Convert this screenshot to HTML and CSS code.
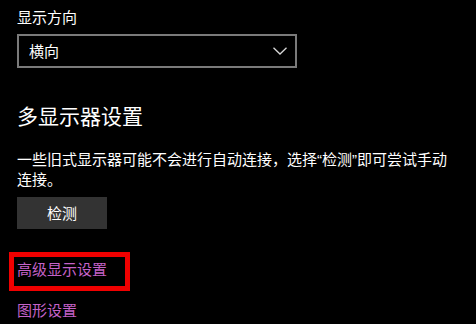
FILE: index.html
```html
<!DOCTYPE html>
<html lang="zh-CN">
<head>
<meta charset="utf-8">
<link rel="stylesheet" href="styles.css">
</head>
<body>
<div class="page">
  <div class="label">显示方向</div>
  <div class="select">
    <span class="select-text">横向</span>
    <svg class="chevron" width="14" height="8" viewBox="0 0 14 8"><path d="M0.5 0.8 L7 7 L13.5 0.8" fill="none" stroke="#d8d8d8" stroke-width="1.3"/></svg>
  </div>
  <h2 class="heading">多显示器设置</h2>
  <p class="desc">一些旧式显示器可能不会进行自动连接，选择“检测”即可尝试手动连接。</p>
  <div class="btn">检测</div>
  <div class="highlight"><a class="link">高级显示设置</a></div>
  <a class="link link-second">图形设置</a>
</div>
</body>
</html>
```

FILE: styles.css
```css
html, body {
  margin: 0;
  padding: 0;
  background: #000;
}
body {
  width: 476px;
  height: 324px;
  overflow: hidden;
  font-family: "Noto Sans CJK SC", "Microsoft YaHei", sans-serif;
  color: #fff;
  font-size: 15px;
  line-height: 20px;
}
.page {
  padding: 7px 0 0 17px;
  display: flex;
  flex-direction: column;
  align-items: flex-start;
}
.label {
  line-height: 20px;
}
.select {
  margin-top: 7px;
  box-sizing: border-box;
  width: 280px;
  height: 34px;
  border: 2px solid #7a7a7a;
  display: flex;
  align-items: center;
  justify-content: space-between;
  padding: 0 8px 0 10px;
}
.chevron {
  display: block;
}
.heading {
  margin: 33px 0 0;
  font-size: 21px;
  font-weight: normal;
  line-height: 28px;
}
.desc {
  margin: 21px 0 0;
  width: 440px;
  line-height: 20px;
  font-family: "Liberation Sans", "Noto Sans CJK SC", sans-serif;
}
.btn {
  margin-top: 7px;
  width: 90px;
  height: 32px;
  background: #333;
  display: flex;
  align-items: center;
  justify-content: center;
}
.highlight {
  margin: 23px 0 0 -8px;
  box-sizing: border-box;
  width: 121px;
  border: 5px solid #f00000;
  padding: 2px 0 7px 3px;
}
.link {
  display: block;
  color: #c462c8;
  line-height: 20px;
}
.link-second {
  margin-top: 9px;
}
```
